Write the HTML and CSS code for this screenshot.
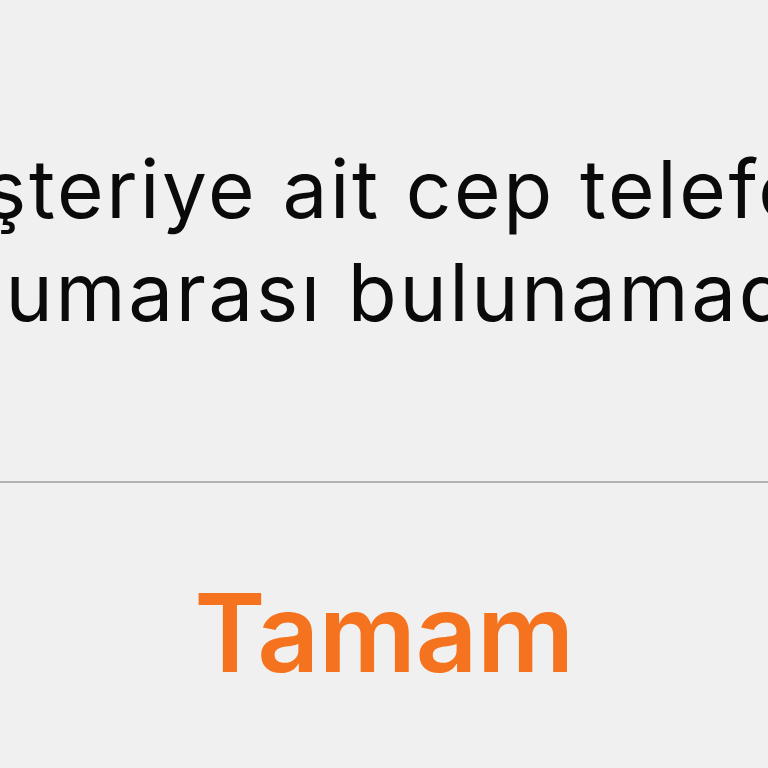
FILE: index.html
```html
<!DOCTYPE html>
<html lang="tr">
<head>
<meta charset="utf-8">
<link rel="stylesheet" href="styles.css">
</head>
<body>
<div class="alert">
  <div class="message">
    <p class="text">Müşteriye ait cep telefonu<br>numarası bulunamadı</p>
  </div>
  <div class="sep"></div>
  <div class="actions">
    <span class="btn">Tamam</span>
  </div>
</div>
</body>
</html>
```
FILE: styles.css
```css
html, body {
  margin: 0;
  padding: 0;
  width: 768px;
  height: 768px;
  overflow: hidden;
  background: #f0f0f0;
}
.alert {
  width: 768px;
  display: flex;
  flex-direction: column;
}
.message {
  height: 481px;
  display: flex;
  justify-content: center;
  padding-top: 137px;
  box-sizing: border-box;
}
.text {
  margin: 0;
  white-space: nowrap;
  text-align: center;
  font-family: Inter, "Noto Sans", sans-serif;
  font-size: 80px;
  line-height: 103px;
  color: #0a0a0a;
  letter-spacing: 2.6px;
}
.sep {
  height: 2px;
  background: #b2b2b2;
}
.actions {
  display: flex;
  justify-content: center;
  padding-top: 90px;
}
.btn {
  font-family: Inter, "Noto Sans", sans-serif;
  font-weight: 600;
  font-size: 108px;
  line-height: 120px;
  letter-spacing: -0.5px;
  color: #f5731f;
}
```
